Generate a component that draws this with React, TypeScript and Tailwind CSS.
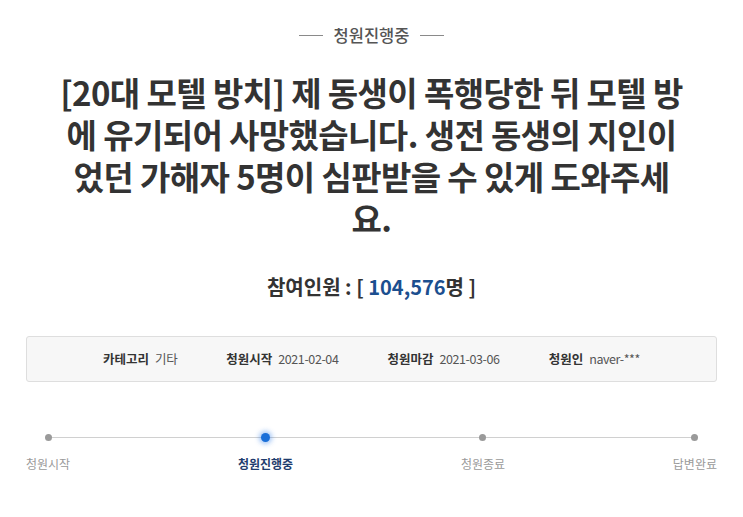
import React from "react";

const KR = { fontFamily: '"Noto Sans CJK KR", "Noto Sans", sans-serif' };

export default function App() {
  const steps = [
    { label: "청원시작", active: false },
    { label: "청원진행중", active: true },
    { label: "청원종료", active: false },
    { label: "답변완료", active: false },
  ];
  return (
    <div className="w-[743px] h-[517px] bg-white overflow-hidden" style={KR}>
      <div className="flex items-center justify-center gap-[11px] pt-[22px]">
        <span className="block w-[24px] h-px bg-[#8a8a8a]" />
        <span className="text-[16.5px] leading-[26px] text-[#555] font-medium">청원진행중</span>
        <span className="block w-[24px] h-px bg-[#8a8a8a]" />
      </div>

      <h1 className="mt-[23px] text-center font-bold text-[33px] leading-[42px] text-[#333] tracking-[-0.6px]">
        <span className="block">[20대 모텔 방치] 제 동생이 폭행당한 뒤 모텔 방</span>
        <span className="block">에 유기되어 사망했습니다. 생전 동생의 지인이</span>
        <span className="block">었던 가해자 5명이 심판받을 수 있게 도와주세</span>
        <span className="block">요.</span>
      </h1>

      <div className="mt-[35px] text-center text-[20px] leading-[26px] font-bold text-[#333]">
        참여인원 : [ <span className="text-[#1c4f8f]">104,576</span>명 ]
      </div>

      <div className="mx-[26px] mt-[36px] h-[46px] bg-[#f7f7f7] border border-[#dedede] rounded-[3px] flex items-center justify-center gap-[49px] text-[12.5px]">
        {[
          ["카테고리", "기타"],
          ["청원시작", "2021-02-04"],
          ["청원마감", "2021-03-06"],
          ["청원인", "naver-***"],
        ].map(([k, v]) => (
          <div key={k} className="flex items-center gap-[6px]">
            <span className="font-bold text-[#333]">{k}</span>
            <span
              className="text-[#555] tracking-[-0.4px]"
              style={{ fontFamily: '"Noto Sans CJK KR", "Liberation Sans Narrow", "Liberation Sans", sans-serif' }}
            >
              {v}
            </span>
          </div>
        ))}
      </div>

      <div className="relative mx-[26px] mt-[51px]">
        <div className="absolute left-[22px] right-[22px] top-[4px] h-px bg-[#d0d0d0]" />
        <div className="relative flex justify-between">
          {steps.map((s) => (
            <div key={s.label} className="flex flex-col items-center">
              <div className="h-[9px] flex items-center justify-center">
                {s.active ? (
                  <span className="block w-[9px] h-[9px] rounded-full bg-[#1a6fd8] shadow-[0_0_5px_2px_rgba(40,120,230,0.45)]" />
                ) : (
                  <span className="block w-[7px] h-[7px] rounded-full bg-[#9a9a9a]" />
                )}
              </div>
              <span
                className={
                  "mt-[14px] text-[12px] leading-[16px] " +
                  (s.active ? "font-bold text-[#1f3d6e]" : "text-[#9a9a9a]")
                }
              >
                {s.label}
              </span>
            </div>
          ))}
        </div>
      </div>
    </div>
  );
}
